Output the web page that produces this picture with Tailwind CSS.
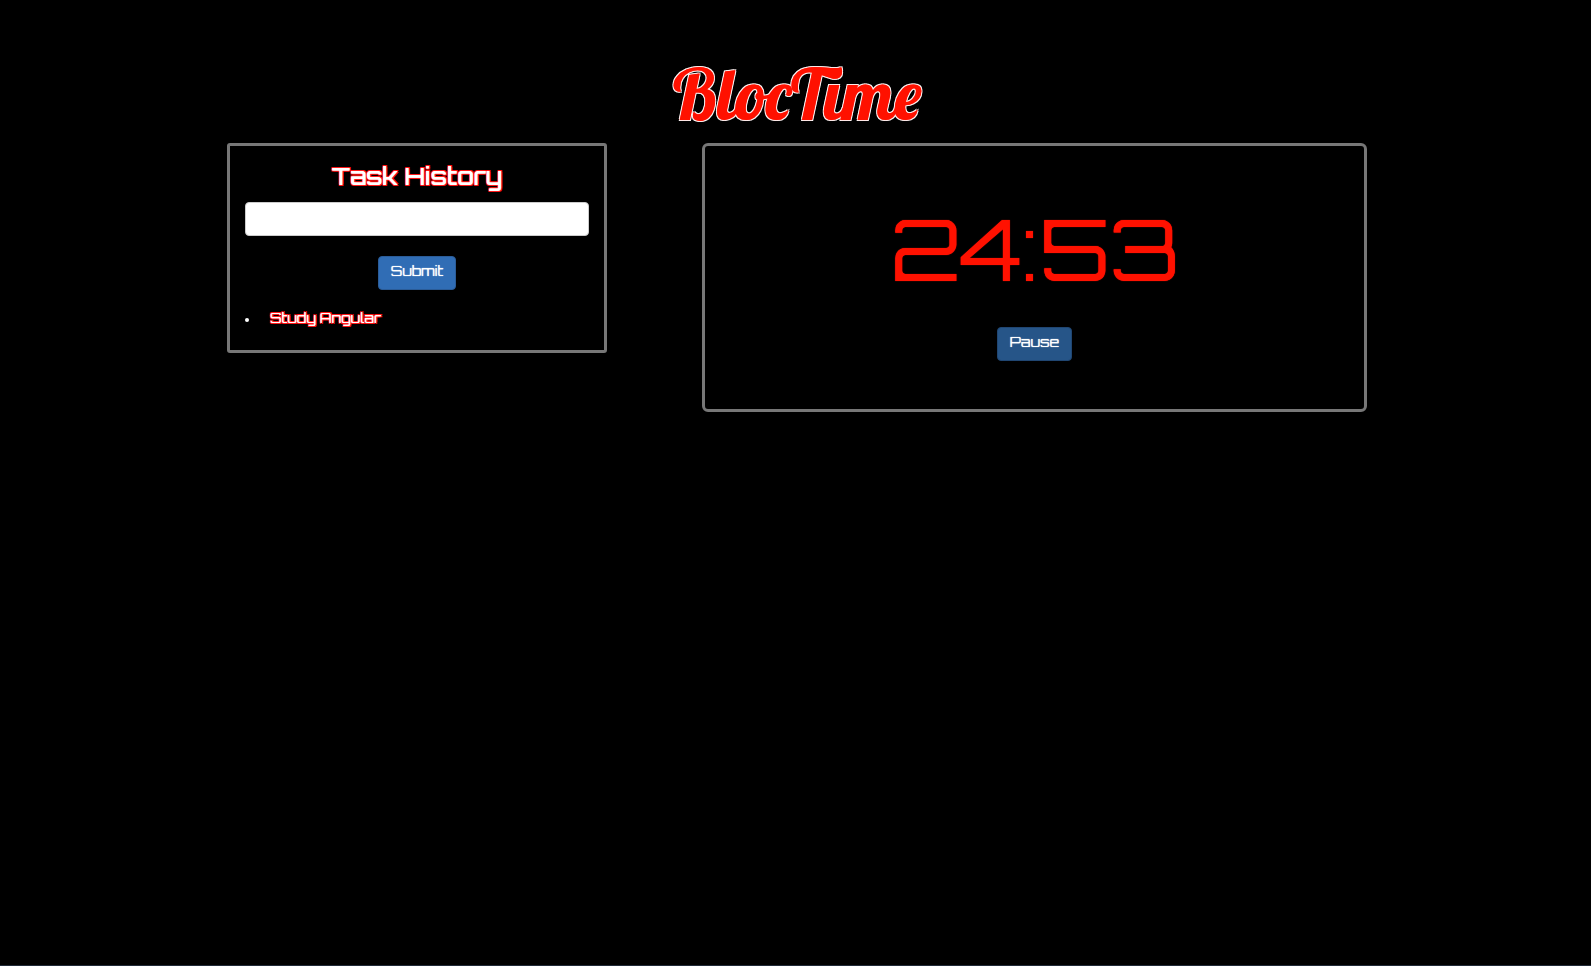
<!DOCTYPE html>
<html lang="en">
<head>
<meta charset="utf-8">
<meta name="viewport" content="width=device-width, initial-scale=1">
<title>BlocTime</title>
<script src="https://cdn.jsdelivr.net/npm/@tailwindcss/browser@4"></script>
</head>
<body class="flex min-h-screen flex-col border-b border-[#202a38] bg-black pl-[3px] font-['Orbitron','DejaVu_Sans',sans-serif] text-sm text-white">
  <header class="pt-[52px] pb-[7px] text-center">
    <h1 class="font-['Lobster','Liberation_Serif',serif] text-[70px] leading-[84px] font-medium text-[#ff1100] [text-shadow:0_0_1px_#f10,-1px_-1px_#fff,1px_-1px_#fff,-1px_1px_#fff,1px_1px_#fff]">BlocTime</h1>
  </header>
  <main class="mx-auto grid w-full max-w-[1140px] grid-cols-12 items-start">
    <section class="col-span-4 rounded-[3px] border-3 border-[#777] px-[15px] pb-[22px] pt-[17px]">
      <h2 class="text-center text-2xl leading-[26px] font-medium [text-shadow:0_0_1px_#fff,-1px_-1px_#f00,1px_-1px_#f00,-1px_1px_#f00,1px_1px_#f00]"><label for="task">Task History</label></h2>
      <form class="mt-[13px] flex flex-col items-center gap-5">
        <input id="task" type="text" class="h-[34px] w-full rounded border border-[#ccc] bg-white px-3 text-black">
        <button type="button" class="h-[34px] rounded border border-[#2b5c98] bg-[#306db5] px-3 pb-1 leading-5 [text-shadow:0_0_1px_#fff]">Submit</button>
      </form>
      <ul class="mt-[18px] leading-5">
        <li class="flex items-center gap-[21px] before:mt-1 before:size-1 before:rounded-full before:bg-white"><span class="[text-shadow:0_0_1px_#fff,-1px_-1px_#f00,1px_-1px_#f00,-1px_1px_#f00,1px_1px_#f00]">Study Angular</span></li>
      </ul>
    </section>
    <section class="col-span-7 col-start-6 flex flex-col items-center rounded-md border-3 border-[#777] pb-[48px] pt-[53px]">
      <time class="text-[84px] leading-[100px] text-[#ff1100] [text-shadow:0_0_1px_#f10]">24:53</time>
      <button type="button" class="mt-[28px] h-[34px] rounded border border-[#204672] bg-[#265588] px-3 pb-1 leading-5 [text-shadow:0_0_1px_#fff]">Pause</button>
    </section>
  </main>
</body>
</html>
